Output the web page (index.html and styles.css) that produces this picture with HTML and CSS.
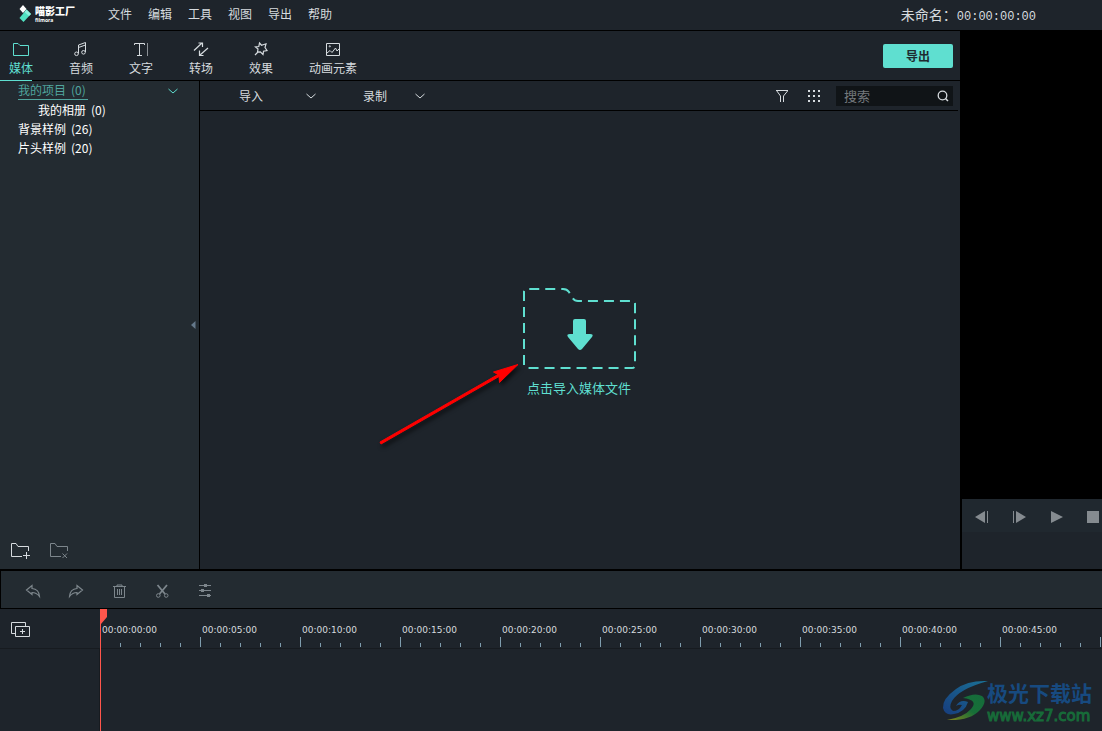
FILE: index.html
```html
<!DOCTYPE html>
<html lang="zh-CN">
<head>
<meta charset="utf-8">
<title>喵影工厂</title>
<link rel="stylesheet" href="styles.css">
</head>
<body>
<header class="topbar">
  <div class="brand">
    <svg class="brand-mark" width="14" height="18" viewBox="0 0 14 18"><path d="M4 0 7.500 4 4 8 .5 4z" fill="#fff"/><path d="M7.500 4.500 12 9 4.500 17 .5 13z" fill="#50e3c2"/><path d="M7.500 4.500 12 9 10 11 5.500 7z" fill="#8ff3df"/></svg>
    <div class="brand-text"><span class="brand-cn">喵影工厂</span><span class="brand-en">filmora</span></div>
  </div>
  <nav class="menu">
    <button>文件</button><button>编辑</button><button>工具</button><button>视图</button><button>导出</button><button>帮助</button>
  </nav>
  <div class="project">未命名：<span class="timecode">00:00:00:00</span></div>
</header>

<main class="workspace">
  <section class="library">
    <div class="tabs">
      <button class="tab active"><svg width="16" height="16" viewBox="0 0 16 16"><path d="M.5 14.500V2.500H5L7 4.500H15.500V14.500z"/></svg>媒体</button>
      <button class="tab"><svg width="16" height="16" viewBox="0 0 16 16"><path d="M5.500 12.500V4L12.500 1.500V11M5.500 6.500 12.500 4"/><circle cx="3.500" cy="12.800" r="1.800"/><circle cx="10.500" cy="11.300" r="1.800"/></svg>音频</button>
      <button class="tab"><svg width="16" height="16" viewBox="0 0 16 16"><path d="M1.500 4V2.500H11.500V4M6.500 2.500V14M4 14.500H9"/><path d="M14.500 2V15" opacity=".6"/></svg>文字</button>
      <button class="tab"><svg width="16" height="16" viewBox="0 0 16 16"><path d="M1 9.500 9 2M5.500 2H9.500V6M15 7 7 14M6.500 9.500V14.500H10.500" stroke-width="1.200"/></svg>转场</button>
      <button class="tab"><svg width="16" height="16" viewBox="0 0 16 16"><path d="M6.500 2 8.500 4.200 13 2.800 12 6.500 14 9.500 10.500 10.200 10 13.500 7.300 10.800 4.500 11 5 8 2.500 6 5.800 5.500zM5.500 10.500 2 14" stroke-width="1.200"/></svg>效果</button>
      <button class="tab"><svg width="16" height="16" viewBox="0 0 16 16"><path d="M1.500 2.500H14.500V14.500H1.500zM2 12 5 9.500 7 11.500 10.500 7 12 10 14 8"/><circle cx="4.800" cy="5.300" r=".6"/></svg>动画元素</button>
      <button class="export">导出</button>
    </div>
    <div class="library-body">
      <aside class="sidebar">
        <ul class="tree">
          <li class="current"><a href="#project"><span>我的项目</span><span>(0)</span></a><svg class="chevron" width="10" height="6" viewBox="0 0 10 6"><path d="M.5 1 5 5 9.500 1"/></svg></li>
          <li class="child"><a href="#album"><span>我的相册</span><span>(0)</span></a></li>
          <li><a href="#backgrounds"><span>背景样例</span><span>(26)</span></a></li>
          <li><a href="#intros"><span>片头样例</span><span>(20)</span></a></li>
        </ul>
        <button class="collapse" aria-label="收起"><svg width="5" height="8" viewBox="0 0 5 8"><path d="M4.500 0V8L0 4z"/></svg></button>
        <div class="folder-actions">
          <button aria-label="新建文件夹"><svg width="20" height="18" viewBox="0 0 20 18"><path d="M11 14.500H.5V1.500H5L7 4.500H17.500V9M15.500 10V17M12 13.500H19"/></svg></button>
          <button class="dim" aria-label="删除文件夹"><svg width="20" height="18" viewBox="0 0 20 18"><path d="M11 14.500H.5V1.500H5L7 4.500H17.500V9M12.500 11.500 17 16M17 11.500 12.500 16"/></svg></button>
        </div>
      </aside>
      <div class="media">
        <div class="media-bar">
          <button class="drop import">导入<svg class="chevron" width="10" height="6" viewBox="0 0 10 6"><path d="M.5 1 5 5 9.500 1"/></svg></button>
          <button class="drop record">录制<svg class="chevron" width="10" height="6" viewBox="0 0 10 6"><path d="M.5 1 5 5 9.500 1"/></svg></button>
          <div class="media-tools">
            <button aria-label="筛选"><svg width="12" height="14" viewBox="0 0 12 14"><path d="M0 1.500H12L7.500 7V13M.5 1.500 4.500 7V13"/></svg></button>
            <button aria-label="网格"><svg class="solid" width="12" height="14" viewBox="0 0 12 14"><path d="M0 1h2v2H0zM5 1h2v2H5zM10 1h2v2h-2zM0 6h2v2H0zM5 6h2v2H5zM10 6h2v2h-2zM0 11h2v2H0zM5 11h2v2H5zM10 11h2v2h-2z"/></svg></button>
            <label class="search"><input type="text" placeholder="搜索" aria-label="搜索"><svg width="12" height="12" viewBox="0 0 12 12"><circle cx="5.500" cy="5.500" r="4.300" stroke-width="1.300"/><path d="M8.500 8.500 11 11" stroke-width="1.500"/></svg></label>
          </div>
        </div>
        <div class="drop-zone">
          <button class="import-box">
            <svg width="114" height="82" viewBox="0 0 114 82"><path class="dash" d="M2 77V4Q2 1 5 1H41Q45 1 47 4L50 9Q52 13 56 13H110Q113 13 113 16V77Q113 80 110 80H2"/><path class="down" d="M53 31H62Q64 31 64 33V46H68Q72 46 70 49L60 61Q58 63 56 61L46 49Q44 46 48 46H51V33Q51 31 53 31z"/></svg>
            <span>点击导入媒体文件</span>
          </button>
          <svg class="pointer" width="150" height="92" viewBox="0 0 150 92"><path d="M7 81 125 13.500 120.500 11 145 3.500 126.500 21.500 126 15.500 8 83z"/></svg>
        </div>
      </div>
    </div>
  </section>
  <section class="preview">
    <div class="screen"></div>
    <div class="playback">
      <button aria-label="上一帧"><svg width="14" height="14" viewBox="0 0 14 14"><path d="M0 7 10 1V13zM12 1h1v12h-1z"/></svg></button>
      <button aria-label="下一帧"><svg width="14" height="14" viewBox="0 0 14 14"><path d="M0 1h1v12H0zM3 1 13 7 3 13z"/></svg></button>
      <button aria-label="播放"><svg width="12" height="14" viewBox="0 0 12 14"><path d="M0 1 12 7 0 13z"/></svg></button>
      <button aria-label="停止"><svg width="12" height="14" viewBox="0 0 12 14"><path d="M0 1H12V13H0z"/></svg></button>
    </div>
  </section>
</main>

<div class="edit-bar">
  <button aria-label="撤销"><svg width="16" height="16" viewBox="0 0 16 16"><path d="M1.500 7 7 2.500V5.500Q14 6 14.500 13.500Q11.500 9.500 7 9.500V11.500z" stroke-width="1.200"/></svg></button>
  <button aria-label="重做"><svg width="16" height="16" viewBox="0 0 16 16"><path d="M14.500 7 9 2.500V5.500Q2 6 1.500 13.500Q4.500 9.500 9 9.500V11.500z" stroke-width="1.200"/></svg></button>
  <button aria-label="删除"><svg width="16" height="16" viewBox="0 0 16 16"><path d="M2 3.500H15M6 3.500V2H11V3.500M3.500 4V14.500H13.500V4M6.500 6V12M8.500 6V12M10.500 6V12"/></svg></button>
  <button aria-label="剪切"><svg width="16" height="16" viewBox="0 0 16 16"><path d="M3.500 2 11 11M13 2 5.500 11" stroke-width="1.800"/><circle cx="4.300" cy="12.500" r="1.800"/><circle cx="12.200" cy="12.500" r="1.800"/></svg></button>
  <button aria-label="调整"><svg width="16" height="16" viewBox="0 0 16 16"><path d="M2 2.500H14M2 7.500H14M2 12.500H14"/><path class="knob" d="M7 1h3v3H7zM4 6h3v3H4zM10 11h3v3h-3z"/></svg></button>
</div>

<section class="timeline">
  <div class="track-head"><button aria-label="添加轨道"><svg width="20" height="16" viewBox="0 0 20 16"><path d="M4 11.500H.5V.5H14.500V4M4.500 4.500H18.500V14.500H4.500zM11.500 7V12M9 9.500H14"/></svg></button></div>
  <div class="ruler">
    <span>00:00:00:00</span><span>00:00:05:00</span><span>00:00:10:00</span><span>00:00:15:00</span><span>00:00:20:00</span><span>00:00:25:00</span><span>00:00:30:00</span><span>00:00:35:00</span><span>00:00:40:00</span><span>00:00:45:00</span>
  </div>
  <div class="track-names"></div>
  <div class="tracks"></div>
  <div class="playhead"><svg width="7" height="15" viewBox="0 0 7 15"><path d="M0 0H7V8L1 15H0z"/></svg></div>
  <div class="watermark">
    <svg width="46" height="42" viewBox="0 0 46 42">
      <defs>
        <linearGradient id="blue" x1="0" y1="1" x2="1" y2="0"><stop offset="0" stop-color="#173d7e"/><stop offset="1" stop-color="#1b7296"/></linearGradient>
        <linearGradient id="green" x1="0" y1="1" x2="1" y2="0"><stop offset="0" stop-color="#86841b"/><stop offset=".5" stop-color="#176f38"/><stop offset="1" stop-color="#156b3b"/></linearGradient>
      </defs>
      <path fill="url(#blue)" d="M46 1Q26 0 14 9Q0 19 1 28Q3 36 12 34Q23 32 26 22Q18 19 14 26Q17 24 20 25Q17 31 11 31Q6 28 10 21Q17 9 46 1z"/>
      <path fill="url(#green)" d="M21 18Q33 12 40 16Q46 21 38 30Q28 41 5 40Q22 37 29 29Q37 20 21 18z"/>
    </svg>
    <div class="watermark-text"><span>极光下载站</span><span class="site">www.xz7.com</span></div>
  </div>
</section>
</body>
</html>
```
FILE: styles.css
```css
:root {
  --bg: #1e242b;
  --panel: #232b31;
  --text: #d6dbdf;
  --teal: #5fdfd0;
  --dim: #7d868c;
}

* { box-sizing: border-box; }

body {
  margin: 0;
  height: 100vh;
  display: flex;
  flex-direction: column;
  overflow: hidden;
  background: var(--bg);
  color: var(--text);
  font: 12px/18px "Noto Sans CJK SC", sans-serif;
}

button {
  display: flex;
  align-items: center;
  padding: 0;
  border: 0;
  background: none;
  color: inherit;
  font: inherit;
  white-space: nowrap;
}

svg {
  display: block;
  flex: none;
  fill: none;
  stroke: currentColor;
}

.topbar {
  display: flex;
  align-items: center;
  height: 31px;
  padding: 0 66px 2px 19px;
  border-bottom: 1px solid #000;
}

.brand { display: flex; gap: 2px; width: 89px; }
.brand-mark { stroke: none; }
.brand-text { display: flex; flex-direction: column; color: #fff; font-weight: 900; }
.brand-cn { font-size: 10px; line-height: 12px; }
.brand-en { font: bold 5px/6px "Open Sans", sans-serif; }
.menu { display: flex; gap: 16px; }
.project { margin-left: auto; padding-top: 2px; font-size: 14px; }
.timecode { font: 12px/18px "Liberation Mono", monospace; }

.workspace {
  flex: 1;
  min-height: 0;
  display: grid;
  grid-template-columns: minmax(0, 1fr) 140px;
  gap: 2px;
  background: #000;
  border-bottom: 2px solid #000;
}

.library {
  display: flex;
  flex-direction: column;
  min-height: 0;
  background: var(--bg);
}

.tabs {
  display: flex;
  gap: 36px;
  height: 50px;
  padding: 0 7px 0 9px;
  border-bottom: 1px solid #000;
  position: relative;
}

.tab {
  flex-direction: column;
  gap: 2px;
  padding-top: 10px;
}

.tab.active { color: var(--teal); }

.tab.active::after {
  content: "";
  position: absolute;
  left: 0;
  bottom: -1px;
  width: 32px;
  height: 1px;
  background: var(--teal);
}

.export {
  justify-content: center;
  align-self: center;
  width: 70px;
  height: 24px;
  margin-left: auto;
  border-radius: 2px;
  background: var(--teal);
  color: #1e2b30;
  font-weight: bold;
}

.library-body {
  flex: 1;
  min-height: 0;
  display: grid;
  grid-template-columns: 200px minmax(0, 1fr);
}

.sidebar {
  display: grid;
  grid-template-rows: 1fr auto 1fr;
  background: var(--panel);
  border-right: 1px solid #000;
}

.tree { list-style: none; margin: 0; padding: 0 21px 0 18px; }
.tree li { display: flex; align-items: center; justify-content: space-between; height: 19px; color: #fff; }
.tree a { display: flex; gap: 5px; color: inherit; text-decoration: none; }
.tree .child { padding-left: 20px; }
.tree .current { color: var(--teal); }
.tree .current a { padding-right: 2px; color: #50a59e; border-bottom: 1px solid #50a59e; }

.collapse { justify-self: end; margin-right: 3px; color: #64788a; }
.collapse svg { fill: currentColor; stroke: none; }
.folder-actions { display: flex; align-items: end; gap: 19px; padding: 0 11px 9px; }
.dim { color: var(--dim); }

.media { display: flex; flex-direction: column; min-width: 0; }

.media-bar {
  display: flex;
  align-items: center;
  height: 30px;
  margin-right: 2px;
  padding: 0 5px 0 39px;
  border-bottom: 1px solid #000;
}

.drop { justify-content: space-between; }
.import { width: 77px; margin-right: 47px; }
.record { width: 62px; }
.media-tools { display: flex; align-items: center; gap: 20px; margin-left: auto; }
.solid { fill: currentColor; stroke: none; }

.search {
  display: flex;
  align-items: center;
  width: 117px;
  height: 20px;
  margin-left: -4px;
  padding: 0 4px 0 8px;
  background: #101417;
}

.search input {
  flex: 1;
  min-width: 0;
  padding: 0;
  border: 0;
  outline: 0;
  background: none;
  color: inherit;
  font: 13px/18px "Noto Sans CJK SC", sans-serif;
}

.search input::placeholder { color: #74797d; }

.drop-zone {
  flex: 1;
  display: grid;
  place-items: center;
  padding: 4px 2px 0 0;
  position: relative;
}

.import-box {
  flex-direction: column;
  gap: 9px;
  color: var(--teal);
  font-size: 13px;
}

.dash { stroke-width: 2; stroke-dasharray: 10 6; }
.down { fill: currentColor; stroke: none; }

.pointer {
  position: absolute;
  left: calc(50% - 207px);
  top: calc(50% + 21px);
  fill: #f00;
  stroke: #f00;
  stroke-width: 1;
  filter: drop-shadow(2px 3px 2px #000a);
}

.preview { display: flex; flex-direction: column; background: var(--bg); overflow: hidden; }
.screen { flex: 1; background: #000; }

.playback {
  display: flex;
  align-items: start;
  justify-content: space-between;
  height: 70px;
  padding: 11px 3px 0 13px;
  background: linear-gradient(#20282f 33px, var(--bg) 33px);
  color: #858b90;
}

.playback svg { fill: currentColor; stroke: none; }

.edit-bar {
  display: flex;
  align-items: center;
  gap: 27px;
  height: 38px;
  padding: 2px 24px 0;
  border-left: 1px solid #000;
  border-bottom: 1px solid #000;
  background: var(--panel);
  color: var(--dim);
}

.knob { fill: currentColor; stroke: none; }

.timeline {
  display: grid;
  grid-template-columns: 100px minmax(0, 1fr);
  grid-template-rows: 40px 82px;
  position: relative;
}

.track-head,
.ruler { border-bottom: 1px solid #171b20; }

.track-head { display: flex; align-items: center; padding: 2px 11px 0; }

.ruler {
  display: flex;
  overflow: hidden;
  background:
    repeating-linear-gradient(90deg, #7f9dae 0 1px, transparent 1px 100px) 0 28px / 100% 10px no-repeat,
    repeating-linear-gradient(90deg, #7f9dae 0 1px, transparent 1px 20px) 0 34px / 100% 4px no-repeat;
}

.ruler span {
  flex: 0 0 100px;
  padding: 12px 0 0 2px;
  font: 9px/18px "DejaVu Sans", sans-serif;
}

.track-names { border-right: 1px solid #171b20; }

.playhead {
  position: absolute;
  left: 100px;
  top: 0;
  bottom: 0;
  border-left: 1px solid #ff564c;
}

.playhead svg {
  margin-left: -1px;
  fill: #ff564c;
  stroke: none;
}

.watermark {
  position: absolute;
  right: 10px;
  bottom: 6px;
  display: flex;
  align-items: center;
}

.watermark svg { stroke: none; margin-right: -1px; }

.watermark-text {
  display: flex;
  flex-direction: column;
  color: #174a80;
  font-size: 21px;
  line-height: 30px;
  font-weight: bold;
}

.site {
  color: #176b39;
  font: 15px/18px "DejaVu Sans", sans-serif;
  -webkit-text-stroke: 1px #176b39;
}
```
